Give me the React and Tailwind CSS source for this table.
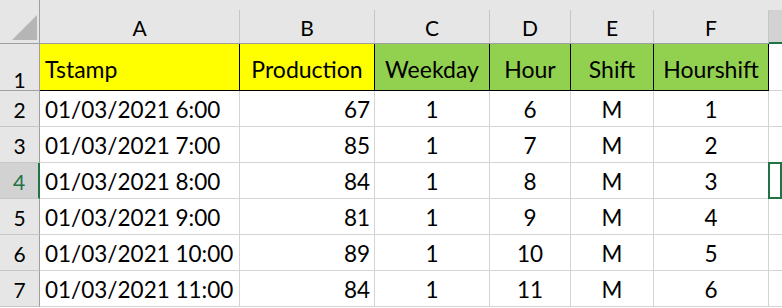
import React from 'react';

const cols = ['A', 'B', 'C', 'D', 'E', 'F'];

const rows = [
  ['01/03/2021 6:00', '67', '1', '6', 'M', '1'],
  ['01/03/2021 7:00', '85', '1', '7', 'M', '2'],
  ['01/03/2021 8:00', '84', '1', '8', 'M', '3'],
  ['01/03/2021 9:00', '81', '1', '9', 'M', '4'],
  ['01/03/2021 10:00', '89', '1', '10', 'M', '5'],
  ['01/03/2021 11:00', '84', '1', '11', 'M', '6'],
];

// alignment per data column: A left, B right, rest centered
const align = ['justify-start pl-[5px]', 'justify-end pr-[4px]', 'justify-center', 'justify-center', 'justify-center', 'justify-center'];

const titles = [
  { text: 'Tstamp', bg: 'bg-[#ffff00]', al: 'justify-start pl-[5px]' },
  { text: 'Production', bg: 'bg-[#ffff00]', al: 'justify-center' },
  { text: 'Weekday', bg: 'bg-[#92d050]', al: 'justify-center' },
  { text: 'Hour', bg: 'bg-[#92d050]', al: 'justify-center' },
  { text: 'Shift', bg: 'bg-[#92d050]', al: 'justify-center' },
  { text: 'Hourshift', bg: 'bg-[#92d050]', al: 'justify-center' },
];

export default function App() {
  return (
    <div
      className="w-[782px] h-[308px] overflow-hidden bg-white text-black"
      style={{ fontFamily: 'Lato, "Open Sans", sans-serif' }}
    >
      <div className="grid grid-cols-[40px_200px_135px_115px_81px_83px_115px_13px] grid-rows-[44px_47px_36px_36px_36px_36px_36px_36px]">
        {/* Corner */}
        <div className="relative bg-[#e6e6e6] border-r border-b border-[#9f9f9f]">
          <svg className="absolute left-[12px] top-[15px]" width="25" height="25" viewBox="0 0 25 25">
            <polygon points="25,0 25,25 0,25" fill="#b5b5b5" />
          </svg>
        </div>

        {/* Column headers */}
        {cols.map((c) => (
          <div key={c} className="bg-[#e6e6e6] pt-[10px] border-b border-[#9f9f9f]">
            <div className="h-full border-r border-[#c6c6c6] flex items-end justify-center pb-[4px] text-[21px] leading-[22px]">
              {c}
            </div>
          </div>
        ))}
        <div className="bg-[#e6e6e6] pt-[10px]">
          <div className="h-full bg-[#d2d2d2] border-b-2 border-[#217346]" />
        </div>

        {/* Row 1 */}
        <div className="bg-[#e6e6e6] border-r border-b border-[#9f9f9f] flex items-end justify-center pb-[0px] text-[21px] leading-[21px]">
          1
        </div>
        {titles.map((t) => (
          <div
            key={t.text}
            className={`${t.bg} ${t.al} border-r border-b border-black flex items-end pb-[9px] text-[23px] leading-[24px]`}
          >
            {t.text}
          </div>
        ))}
        <div className="border-b border-[#d4d4d4]" />

        {/* Data rows */}
        {rows.map((r, i) => {
          const sel = i === 2;
          return (
            <React.Fragment key={i}>
              <div
                className={`${sel ? 'bg-[#d2d2d2] text-[#217346] border-r-2 border-r-[#217346]' : 'bg-[#e6e6e6] border-r border-r-[#9f9f9f]'} border-b border-b-[#c6c6c6] flex items-end justify-center pb-[5px] text-[21px] leading-[22px]`}
              >
                {i + 2}
              </div>
              {r.map((v, j) => (
                <div
                  key={j}
                  className={`${align[j]} border-r border-b border-[#d4d4d4] flex items-end pb-[4px] text-[22.5px] leading-[24px]`}
                >
                  {v}
                </div>
              ))}
              <div className={`${sel ? 'border-2 border-[#217346] -mt-[1px] -ml-[1px]' : 'border-b border-[#d4d4d4]'}`} />
            </React.Fragment>
          );
        })}
      </div>
    </div>
  );
}
